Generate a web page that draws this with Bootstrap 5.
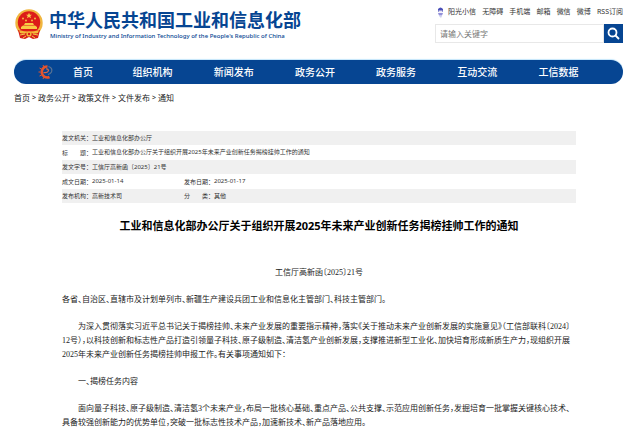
<!DOCTYPE html>
<html lang="zh-CN">
<head>
<meta charset="utf-8">
<meta name="viewport" content="width=device-width, initial-scale=1">
<title>工业和信息化部办公厅关于组织开展2025年未来产业创新任务揭榜挂帅工作的通知</title>
<link href="https://cdn.jsdelivr.net/npm/bootstrap@5.3.0/dist/css/bootstrap.min.css" rel="stylesheet">
<style>
  :root { --blue: #064592; }
  body { font-family: "Noto Sans", "Noto Sans CJK SC", sans-serif; font-size: 8px; line-height: 14px; color: #333; background: #fff; }
  a { color: inherit; text-decoration: none; }
  .page-wrap { padding: 0 17px 0 14px; }
  .masthead { height: 59px; }
  .brand { color: var(--blue); padding-top: 8px; gap: 5px; }
  .brand-zh { font-family: "Noto Sans CJK SC", sans-serif; font-size: 18px; line-height: 23px; font-weight: 700; }
  .brand-en { font-size: 6px; line-height: 10px; font-weight: 500; padding-left: 1px; }
  .tools { width: 188px; padding-top: 5px; }
  .tool-links { font-size: 7px; padding-left: 2px; margin-bottom: 5px; }
  .search-box input { font-size: 8px; line-height: 12px; padding: 2px 4px; border: 1px solid #e8e8e8; border-radius: 0; color: #333; min-height: 0; height: 19px; }
  .search-box input::placeholder { color: #777; }
  .search-box button { width: 19px; height: 19px; padding: 0; border: 0; border-radius: 0; background: var(--blue); }
  .main-nav { background: var(--blue); border-radius: 12px; height: 24px; padding: 0 24px; box-shadow: 0 -1px 1px #c4e6fb; margin-top: 1px; font-family: "Noto Sans CJK SC", sans-serif; font-size: 10px; font-weight: 500; color: #fff; }
  .main-nav .nav-link { color: #fff; padding: 0; text-align: center; flex: 1 1 0; }
  .main-nav .nav-home { flex: 0 0 auto; padding: 0 19px; }
  .crumbs { padding-top: 7px; gap: 2px; color: #222; }
  .crumbs span { font-size: 7px; }
  .doc { padding: 26px 47px 0 48px; }
  .meta { width: 100%; font-size: 6px; line-height: 12px; table-layout: fixed; }
  .meta th, .meta td { padding: 1px 0; font-weight: 400; white-space: nowrap; }
  .meta td { padding-bottom: 2px; }
  .meta tr:nth-child(odd) td { padding-bottom: 1px; }
  .meta tr:nth-child(odd) { background: #f0f0f0; }
  .spread { display: flex; justify-content: space-between; width: 30px; }
  .doc h1 { font-size: 11px; line-height: 18px; font-weight: 700; color: #000; margin: 14px 0 31px; }
  .article { font-family: "Liberation Serif", "Noto Sans CJK SC", serif; font-feature-settings: "halt"; color: #222; }
  .article p { margin: 0 0 13px; }
  .article .indent { text-indent: 2em; }
</style>
</head>
<body>
<div class="page-wrap">
  <header class="masthead d-flex justify-content-between">
    <a href="#" class="brand d-flex align-items-start">
      <svg width="30" height="32" viewBox="0 -1 30 32" aria-hidden="true">
        <circle cx="15" cy="14" r="13.7" fill="#f0b63f"/>
        <path d="M4 21h22l-2 8-5 1-4-2-4 2-5-1z" fill="#d71f1a"/>
        <circle cx="15" cy="13.5" r="11.2" fill="#dc1c18"/>
        <path d="M15 3.8l.9 2h2.1l-1.7 1.3.7 2.1-2-1.3-2 1.3.7-2.1L12 5.8h2.1z" fill="#f8d04c"/>
        <g fill="#f8cc45"><circle cx="9" cy="9.500" r=".9"/><circle cx="12" cy="11.500" r=".9"/><circle cx="18" cy="11.500" r=".9"/><circle cx="21" cy="9.500" r=".9"/>
        <path d="M11 14h8l1 2h-10zM7 18l2-1.500h12l2 1.500v2H7z"/></g>
        <path d="M5 21q10 3 20 0l-1 3q-5 1-6 0l-3-1-3 1q-2 1-6 0z" fill="#f3b93b"/>
        <circle cx="15" cy="25" r="2.600" fill="#f3b93b"/><circle cx="15" cy="25" r="1.200" fill="#dc1c18"/>
        <path d="M6 26l5-1M24 26l-5-1M9 29l3-2M21 29l-3-2" stroke="#f6c64b" fill="none"/>
      </svg>
      <span class="d-flex flex-column">
        <span class="brand-zh">中华人民共和国工业和信息化部</span>
        <span class="brand-en">Ministry of Industry and Information Technology of the People's Republic of China</span>
      </span>
    </a>
    <div class="tools">
      <nav class="tool-links d-flex justify-content-between text-nowrap" aria-label="快捷链接">
        <a href="#" class="d-flex align-items-center gap-1"><svg width="7" height="11" viewBox="0 0 7 11" aria-hidden="true"><path d="M1 2q2.500-3 5 0v3H1z" fill="#4b50b9"/><path d="M1.500 3.500h4v2h-4z" fill="#e9e4f7"/><path d="M1 6h5l-1 2.500H2z" fill="#9290da"/><path d="M2 9h3l-1 2z" fill="#cbd0ef"/></svg>阳光小信</a>
        <a href="#">无障碍</a><a href="#">手机端</a><a href="#">邮箱</a><a href="#">微信</a><a href="#">微博</a><a href="#">RSS订阅</a>
      </nav>
      <form class="search-box d-flex" role="search">
        <input type="search" class="form-control flex-grow-1" placeholder="请输入关键字" aria-label="请输入关键字">
        <button type="button" class="d-flex align-items-center justify-content-center flex-shrink-0" aria-label="搜索"><svg width="13" height="13" viewBox="0 0 13 13" fill="none" stroke="#fff" stroke-width="1.800"><circle cx="5.500" cy="5.500" r="4"/><path d="M8.500 8.500l3.500 3.500"/></svg></button>
      </form>
    </div>
  </header>
  <nav class="main-nav d-flex align-items-center" aria-label="主导航">
    <svg width="16" height="16" viewBox="0 0 16 16" fill="none" aria-hidden="true">
      <path d="M11.500 13A5.500 5.500 0 1 1 9.500 2.500" stroke="#e6532b" stroke-width="2.600"/>
      <path d="M1.500 4l2 1M.5 8h2M1.500 12l2-1M5 1l1 2M5 15l1-2" stroke="#e6532b"/>
      <path d="M5.500 8.500q4.500 .5 5-2-.5-2-2.500-1.500" stroke="#d8694c" stroke-width="1.200"/>
      <path d="M10.500 2.500q4.500 1.500 3 5.500-1 2-3.500 2.500" stroke="#5b7494" stroke-width="1.200"/>
    </svg>
    <a class="nav-link nav-home" href="#">首页</a>
    <a class="nav-link" href="#">组织机构</a>
    <a class="nav-link" href="#">新闻发布</a>
    <a class="nav-link" href="#">政务公开</a>
    <a class="nav-link" href="#">政务服务</a>
    <a class="nav-link" href="#">互动交流</a>
    <a class="nav-link" href="#">工信数据</a>
  </nav>
  <nav class="crumbs d-flex" aria-label="当前位置">
    <a href="#">首页</a><span>&gt;</span><a href="#">政务公开</a><span>&gt;</span><a href="#">政策文件</a><span>&gt;</span><a href="#">文件发布</a><span>&gt;</span><a href="#">通知</a>
  </nav>
  <main class="doc">
    <table class="meta">
      <colgroup><col style="width:30px"><col style="width:92px"><col style="width:30px"><col></colgroup>
      <tbody>
        <tr><th scope="row">发文机关：</th><td colspan="3">工业和信息化部办公厅</td></tr>
        <tr><th scope="row"><span class="spread"><span>标</span><span>题：</span></span></th><td colspan="3">工业和信息化部办公厅关于组织开展2025年未来产业创新任务揭榜挂帅工作的通知</td></tr>
        <tr><th scope="row">发文字号：</th><td colspan="3">工信厅高新函〔2025〕21号</td></tr>
        <tr><th scope="row">成文日期：</th><td>2025-01-14</td><th scope="row">发布日期：</th><td>2025-01-17</td></tr>
        <tr><th scope="row">发布机构：</th><td>高新技术司</td><th scope="row"><span class="spread"><span>分</span><span>类：</span></span></th><td>其他</td></tr>
      </tbody>
    </table>
    <h1 class="text-center">工业和信息化部办公厅关于组织开展2025年未来产业创新任务揭榜挂帅工作的通知</h1>
    <article class="article">
      <p class="text-center">工信厅高新函〔2025〕21号</p>
      <p>各省、自治区、直辖市及计划单列市、新疆生产建设兵团工业和信息化主管部门、科技主管部门。</p>
      <p class="indent">为深入贯彻落实习近平总书记关于揭榜挂帅、未来产业发展的重要指示精神，落实《关于推动未来产业创新发展的实施意见》（工信部联科〔2024〕12号），以科技创新和标志性产品打造引领量子科技、原子级制造、清洁氢产业创新发展，支撑推进新型工业化、加快培育形成新质生产力，现组织开展2025年未来产业创新任务揭榜挂帅申报工作。有关事项通知如下：</p>
      <p class="indent">一、揭榜任务内容</p>
      <p class="indent">面向量子科技、原子级制造、清洁氢3个未来产业，布局一批核心基础、重点产品、公共支撑、示范应用创新任务，发掘培育一批掌握关键核心技术、具备较强创新能力的优势单位，突破一批标志性技术产品，加速新技术、新产品落地应用。</p>
    </article>
  </main>
</div>
</body>
</html>
